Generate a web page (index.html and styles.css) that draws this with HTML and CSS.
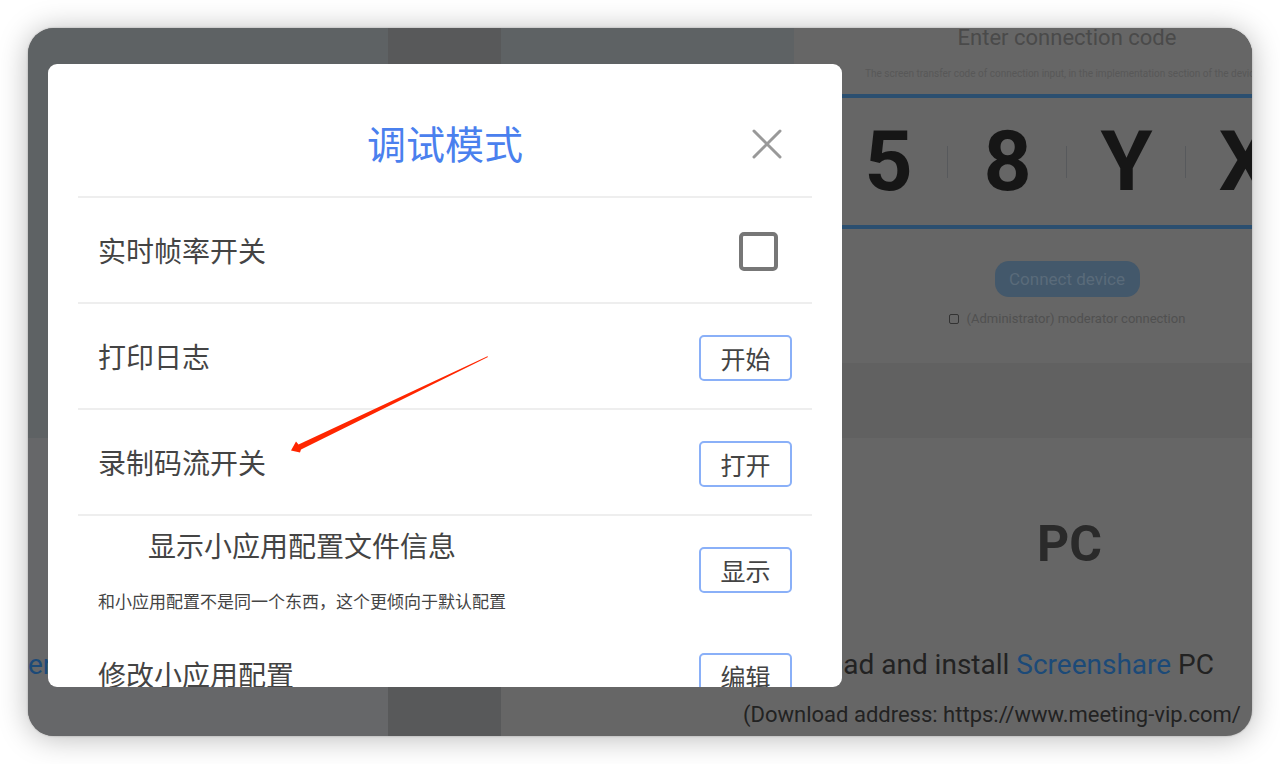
FILE: index.html
```html
<!DOCTYPE html>
<html lang="zh-CN">
<head>
    <meta charset="UTF-8">
    <meta name="viewport" content="width=device-width, initial-scale=1.0">
    <title>调试模式</title>
    <link rel="stylesheet" href="styles.css">
</head>
<body>
    <div class="screen">
        <!-- dimmed page behind the dialog -->
        <div class="top-section">
            <div class="side"></div>
            <div class="strip"></div>
            <div class="preview"></div>
            <div class="connect-panel">
                <div class="connect-box">
                    <div class="connect-title">Enter connection code</div>
                    <div class="connect-hint">The screen transfer code of connection input, in the implementation section of the device</div>
                    <div class="code-row">
                        <span class="code-cell">5</span>
                        <span class="code-cell">8</span>
                        <span class="code-cell">Y</span>
                        <span class="code-cell">X</span>
                    </div>
                    <button type="button" class="connect-btn">Connect device</button>
                    <label class="remember"><input type="checkbox">(Administrator) moderator connection</label>
                </div>
            </div>
        </div>
        <div class="bottom-section">
            <div class="side"><a class="link" href="#">er</a></div>
            <div class="strip"></div>
            <div class="download">
                <h2>PC</h2>
                <p class="install">Download and install <a class="link" href="#">Screenshare</a> PC</p>
                <p class="address">(Download address: https://www.meeting-vip.com/</p>
            </div>
        </div>

        <div class="dialog" role="dialog" aria-labelledby="dialogTitle">
            <div class="dialog-header">
                <h1 id="dialogTitle">调试模式</h1>
                <button type="button" class="close-btn" aria-label="关闭">
                    <svg width="30" height="30" viewBox="0 0 30 30"><path d="M2 2L28 28M28 2L2 28" stroke="#999" stroke-width="3" stroke-linecap="round"/></svg>
                </button>
            </div>
            <div class="row">
                <label for="fps">实时帧率开关</label>
                <input type="checkbox" id="fps" class="check">
            </div>
            <div class="row">
                <span>打印日志</span>
                <button type="button" class="btn">开始</button>
            </div>
            <div class="row">
                <span>录制码流开关</span>
                <button type="button" class="btn">打开</button>
            </div>
            <div class="row no-line">
                <div class="info">
                    <div>显示小应用配置文件信息</div>
                    <small>和小应用配置不是同一个东西，这个更倾向于默认配置</small>
                </div>
                <button type="button" class="btn">显示</button>
            </div>
            <div class="row no-line">
                <span>修改小应用配置</span>
                <button type="button" class="btn">编辑</button>
            </div>
        </div>

        <svg class="arrow" width="200" height="98" viewBox="0 0 200 98">
            <path d="M1 94.5L6 85.5L8.5 88.5L197.5 .2L198 1L11 93.5L10 96.5Z" fill="#ff2600"/>
        </svg>
    </div>
</body>
</html>
```
FILE: styles.css
```css
* {
    box-sizing: border-box;
}
body {
    margin: 0;
    padding: 28px;
    background: #fff;
    font-family: Roboto, "Noto Sans CJK SC", sans-serif;
}
h1, h2, p {
    margin: 0;
    font-weight: normal;
}
.screen {
    position: relative;
    display: flex;
    flex-direction: column;
    min-height: calc(100vh - 56px);
    background: #666;
    border-radius: 26px;
    overflow: hidden;
    box-shadow: 0 0 2px rgba(0, 0, 0, 0.3), 0 2px 30px rgba(0, 0, 0, 0.28);
}

/* page behind */
.top-section, .bottom-section {
    display: flex;
    overflow: hidden;
}
.top-section {
    height: 410px;
}
.bottom-section {
    flex: 1;
}
.side {
    width: 360px;
    flex: none;
}
.strip {
    width: 113px;
    flex: none;
    background: #58595a;
}
.top-section .side, .preview {
    background: #5e6264;
}
.preview {
    flex: 1;
}
.bottom-section .side {
    padding-top: 210px;
    background: #666769;
    font-size: 28px;
    line-height: 34px;
}
.connect-panel {
    width: 458px;
    flex: none;
    background: #616161;
    overflow: hidden;
}
.connect-box {
    display: flex;
    flex-direction: column;
    align-items: center;
    width: 546px;
    height: 335px;
    background: #666;
}
.connect-title {
    height: 36px;
    font-size: 22px;
    line-height: 20px;
    color: #4a4a4a;
}
.connect-hint {
    width: 404px;
    height: 30px;
    font-size: 10px;
    line-height: 20px;
    color: #585858;
    white-space: nowrap;
}
.code-row {
    display: flex;
    align-items: center;
    height: 135px;
    border: solid #2b4f70;
    border-width: 4px 0;
}
.code-cell {
    width: 119px;
    font-size: 84px;
    line-height: 84px;
    font-weight: bold;
    text-align: center;
    color: #161616;
    background: linear-gradient(#57595c, #57595c) right center / 1px 32px no-repeat;
}
.connect-btn {
    width: 145px;
    height: 36px;
    margin-top: 32px;
    border: none;
    border-radius: 14px;
    background: #43586b;
    color: #5a6b7a;
    font-family: inherit;
    font-size: 17px;
}
.remember {
    display: flex;
    align-items: center;
    gap: 8px;
    margin-top: 14px;
    font-size: 13px;
    line-height: 16px;
    color: #505050;
}
.remember input {
    appearance: none;
    width: 10px;
    height: 10px;
    margin: 0;
    border: 1px solid #333;
    border-radius: 2px;
}
.download {
    flex: 1;
    min-width: 0;
    padding: 76px 0 0 242px;
    white-space: nowrap;
    color: #222;
    display: flex;
    flex-direction: column;
}
.download h2 {
    padding-right: 150px;
    font-size: 50px;
    line-height: 60px;
    font-weight: bold;
    text-align: right;
    color: #2a2a2a;
}
.install {
    align-self: flex-end;
    padding: 74px 38px 0 0;
    font-size: 28px;
    line-height: 34px;
}
.address {
    padding-top: 18px;
    font-size: 22px;
    line-height: 30px;
}
.link {
    color: #1c4a78;
    text-decoration: none;
}

/* dialog */
.dialog {
    position: absolute;
    top: 36px;
    left: 20px;
    width: 794px;
    height: calc(100% - 85px);
    padding: 0 30px;
    background: #fff;
    border-radius: 9px;
    overflow: hidden;
}
.dialog-header {
    display: grid;
    grid-template-columns: 1fr auto 1fr;
    align-items: center;
    height: 134px;
    padding: 28px 30px 0;
    border-bottom: 2px solid #eee;
}
.dialog-header h1 {
    grid-column: 2;
    padding-top: 4px;
    font-size: 39px;
    line-height: 60px;
    color: #4a80ee;
}
.close-btn {
    justify-self: end;
    height: 30px;
    padding: 0;
    border: none;
    background: none;
    cursor: pointer;
}
.row {
    display: flex;
    justify-content: space-between;
    align-items: center;
    height: 106px;
    padding: 3px 20px 0;
    border-bottom: 2px solid #eee;
    font-size: 28px;
    line-height: 42px;
    color: #444;
}
.row label, .row span, .info {
    padding-top: 3px;
}
.no-line {
    border-color: transparent;
}
.check {
    appearance: none;
    width: 39px;
    height: 39px;
    margin: 0 14px 0 0;
    border: 4px solid #777;
    border-radius: 5px;
}
.btn {
    width: 93px;
    height: 46px;
    padding: 0;
    border: 2px solid #8ab0f8;
    border-radius: 5px;
    background: #fff;
    color: #444;
    font-family: inherit;
    font-size: 25px;
    cursor: pointer;
}
.info {
    display: flex;
    flex-direction: column;
    gap: 20px;
    text-align: center;
}
.info small {
    font-size: 17px;
    line-height: 26px;
}

/* red pointer drawn over the dialog */
.arrow {
    position: absolute;
    top: 328px;
    left: 262px;
    pointer-events: none;
}
```
